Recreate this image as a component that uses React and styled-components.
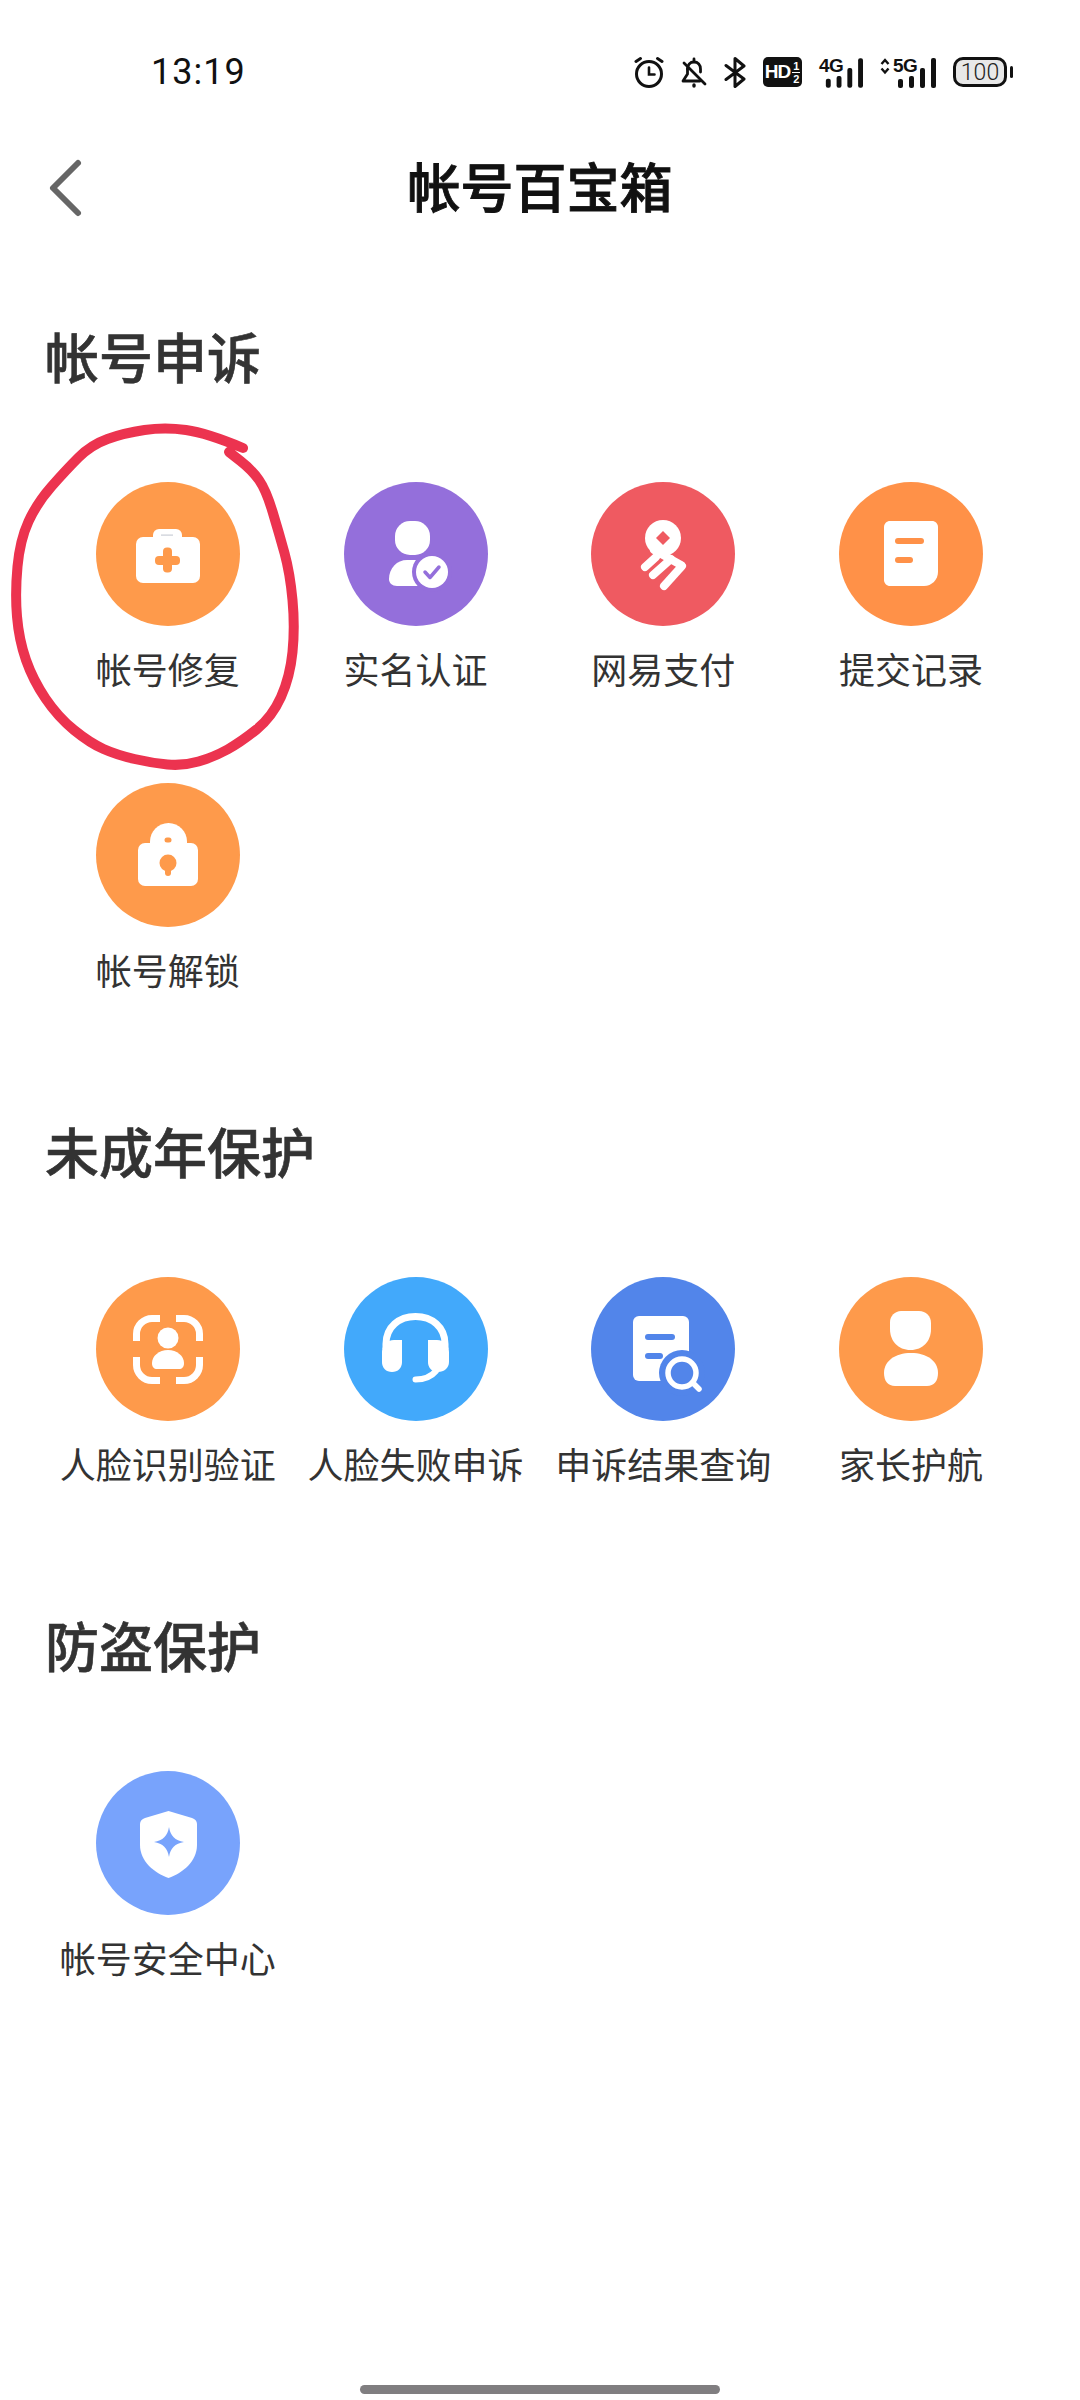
import React from "react"
import styled, { createGlobalStyle } from "styled-components"

const GlobalStyle = createGlobalStyle`
  html, body {
    margin: 0;
    padding: 0;
    background: #fff;
  }
  * {
    box-sizing: border-box;
  }
`

const Page = styled.div`
  position: relative;
  display: flex;
  flex-direction: column;
  width: 1080px;
  height: 2400px;
  overflow: hidden;
  background: #fff;
  font-family: "Noto Sans CJK SC", "Noto Sans", sans-serif;
`

const StatusBar = styled.div`
  display: flex;
  align-items: center;
  justify-content: space-between;
  height: 144px;
  padding: 0 68px 0 151px;
`

const Time = styled.span`
  font-family: Roboto, "Liberation Sans", sans-serif;
  font-size: 36px;
  color: #111;
  letter-spacing: 1px;
`

const StatusIcons = styled.div`
  display: flex;
  align-items: center;
  gap: 17px;
`

const HdBadge = styled.div`
  display: flex;
  align-items: center;
  justify-content: center;
  gap: 2px;
  width: 39px;
  height: 30px;
  border-radius: 5px;
  background: #111;
  color: #fff;
  font-family: "Liberation Sans", sans-serif;
  font-weight: 700;
`

const HdText = styled.span`
  font-size: 19px;
  line-height: 22px;
  letter-spacing: -1px;
`

const HdRate = styled.span`
  display: flex;
  flex-direction: column;
  align-items: center;
  font-size: 11px;
  line-height: 12px;
`

const HdTop = styled.span`
  border-bottom: 1.5px solid #fff;
  padding: 0 1px;
`

const SignalBox = styled.div`
  position: relative;
  width: ${props => (props.$arrows ? "56px" : "44px")};
  height: 31px;
`

const SignalBars = styled.svg`
  display: block;
  width: 100%;
  height: 31px;
`

const SignalLabel = styled.span`
  position: absolute;
  left: ${props => (props.$arrows ? "13px" : "0")};
  top: 0;
  font-family: "Liberation Sans", sans-serif;
  font-size: 19px;
  line-height: 17px;
  font-weight: 700;
  letter-spacing: -0.5px;
  color: #111;
`

const Battery = styled.div`
  position: relative;
  display: flex;
  align-items: center;
  justify-content: center;
  width: 54px;
  height: 30px;
  margin-right: 5px;
  border: 3px solid #111;
  border-radius: 10px;
  background: #e8e8e8;
  font-family: Roboto, "Liberation Sans", sans-serif;
  font-size: 23px;
  font-weight: 300;
  color: #222;

  &::after {
    content: "";
    position: absolute;
    right: -9px;
    top: 6px;
    width: 3px;
    height: 12px;
    border-radius: 2px;
    background: #111;
  }
`

const NavBar = styled.div`
  display: grid;
  grid-template-columns: 1fr auto 1fr;
  align-items: center;
  height: 88px;
  padding: 0 46px;
`

const BackIcon = styled.svg`
  display: block;
  width: 40px;
  height: 64px;
`

const Title = styled.h1`
  margin: 0;
  padding-bottom: 6px;
  font-size: 53px;
  line-height: 60px;
  font-weight: 500;
  -webkit-text-stroke: 0.9px #111;
  color: #111;
`

const Section = styled.section`
  margin-top: ${props => (props.$first ? "94px" : "127px")};
`

const Heading = styled.h2`
  margin: 0 0 96px;
  padding-left: 45px;
  font-size: 54px;
  line-height: 60px;
  font-weight: 500;
  -webkit-text-stroke: 0.6px #333;
  color: #333;
`

const ToolGrid = styled.div`
  display: grid;
  grid-template-columns: repeat(4, 247.7px);
  row-gap: 90px;
  padding-left: 44px;
`

const Tool = styled.div`
  display: flex;
  flex-direction: column;
  align-items: center;
`

const Badge = styled.div`
  width: 144px;
  height: 144px;
  border-radius: 50%;
  background: ${props => props.$color};
  color: ${props => props.$color};
`

const BadgeIcon = styled.svg`
  display: block;
  width: 144px;
  height: 144px;
`

const ToolLabel = styled.span`
  margin-top: 17px;
  font-size: 36px;
  line-height: 50px;
  white-space: nowrap;
  color: #333;
`

const HomeBar = styled.div`
  align-self: center;
  width: 360px;
  height: 9px;
  margin-top: auto;
  margin-bottom: 6px;
  border-radius: 5px;
  background: #807e80;
`

const Scribble = styled.svg`
  position: absolute;
  left: 0;
  top: 0;
  width: 320px;
  height: 800px;
  pointer-events: none;
`

// hand drawn ring round the first tool, points read off the reference
const ringPoints = [
  [243, 448], [207, 433], [165, 427], [124, 433], [91, 445], [66, 470], [37, 503],
  [20, 540], [15, 593], [19, 640], [33, 680], [58, 717], [90, 743], [117, 755],
  [152, 763], [183, 766], [214, 757], [241, 742], [272, 717], [290, 677], [295, 627],
  [290, 573], [279, 533], [266, 490], [252, 470], [229, 452],
]

const ringPath = points => {
  let d = `M${points[0][0]} ${points[0][1]}`
  for (let i = 1; i < points.length - 1; i++) {
    const midX = (points[i][0] + points[i + 1][0]) / 2
    const midY = (points[i][1] + points[i + 1][1]) / 2
    d += ` Q${points[i][0]} ${points[i][1]} ${midX} ${midY}`
  }
  const last = points[points.length - 1]
  return `${d} L${last[0]} ${last[1]}`
}

const Alarm = () => (
  <svg width="30" height="32" viewBox="0 0 30 32" fill="none" stroke="#111" strokeWidth="3" strokeLinecap="round">
    <circle cx="15" cy="18" r="12.5" />
    <path d="M15 11.5V18.5H20.5" strokeWidth="2.6" />
    <path d="M2 5.5L6.5 2.5M28 5.5L23.5 2.5" />
  </svg>
)

const BellOff = () => (
  <svg width="26" height="31" viewBox="0 0 26 31" fill="none" stroke="#111" strokeWidth="2.8" strokeLinecap="round" strokeLinejoin="round">
    <path d="M13 2V4" />
    <path d="M6.5 12C6.5 8 9 5 13 5C17 5 19.5 8 19.5 12V15" />
    <path d="M6.5 12V17L2 24H19" />
    <path d="M3 6L24 27" />
    <path d="M13 28V29" strokeWidth="3.4" />
  </svg>
)

const Bluetooth = () => (
  <svg width="22" height="31" viewBox="0 0 22 31" fill="none" stroke="#111" strokeWidth="3" strokeLinejoin="round" strokeLinecap="round">
    <path d="M2 8.5L20 22L11 29.5V1.5L20 9L2 22.5" />
  </svg>
)

const Signal = ({ label, arrows }) => {
  const left = arrows ? 18 : 7
  return (
    <SignalBox $arrows={arrows}>
      <SignalBars viewBox={`0 0 ${left + 38} 31`}>
        {arrows && (
          <path d="M1.500 7L5 3L8.500 7M1.500 11.500L5 15.500L8.500 11.500" fill="none" stroke="#111" strokeWidth="2.400" />
        )}
        <rect x={left} y="22" width="5" height="9" rx="2" fill="#111" />
        <rect x={left + 11} y="19" width="5" height="12" rx="2" fill="#111" />
        <rect x={left + 22} y="11" width="5" height="20" rx="2" fill="#111" />
        <rect x={left + 33} y="1" width="5" height="30" rx="2" fill="#111" />
      </SignalBars>
      <SignalLabel $arrows={arrows}>{label}</SignalLabel>
    </SignalBox>
  )
}

const MedKit = () => (
  <>
    <rect x="57" y="47" width="29" height="18" rx="6" fill="#fff" />
    <rect x="40" y="55" width="64" height="46" rx="7" fill="#fff" />
    <rect x="65" y="52.500" width="12" height="1.200" fill="#c9cdd6" />
    <rect x="59" y="74" width="25" height="9" rx="4" fill="currentColor" />
    <rect x="67" y="65.500" width="9" height="25" rx="4" fill="currentColor" />
  </>
)

const PersonCheck = () => (
  <>
    <rect x="51" y="39" width="35" height="34" rx="15" fill="#fff" />
    <path d="M45 97C45 86 53 78 63 78H76C84 78 88 84 88 92V104H53C48 104 45 101 45 97Z" fill="#fff" />
    <circle cx="88" cy="90" r="20" fill="currentColor" />
    <circle cx="88" cy="90" r="16" fill="#fff" />
    <path d="M81 90L86 95.500L95 85" fill="none" stroke="currentColor" strokeWidth="3.500" strokeLinecap="round" strokeLinejoin="round" />
  </>
)

const NetEasePay = () => (
  <>
    <circle cx="72" cy="56" r="18" fill="#fff" />
    <path d="M72 49L79 56L72 63L65 56Z" fill="currentColor" />
    <g fill="none" stroke="#fff" strokeWidth="8" strokeLinecap="round">
      <path d="M63 68L90 83" />
      <path d="M65 75L54 85" />
      <path d="M80 77L62 93" />
      <path d="M91 84L73 104" />
    </g>
  </>
)

const Note = () => (
  <>
    <path d="M51 39H93C96.300 39 99 41.700 99 45V90C99 97.700 92.700 104 85 104H51C47.700 104 45 101.300 45 98V45C45 41.700 47.700 39 51 39Z" fill="#fff" />
    <rect x="56" y="56" width="29" height="6" rx="3" fill="currentColor" />
    <rect x="56" y="75" width="18" height="6" rx="3" fill="currentColor" />
  </>
)

const LockIcon = () => (
  <>
    <path d="M54 66V58.500C54 48.300 62.300 40 72.500 40C82.700 40 91 48.300 91 58.500V66Z" fill="#fff" />
    <rect x="42" y="60" width="60" height="43" rx="7" fill="#fff" />
    <rect x="68.500" y="54.500" width="7" height="5" rx="2.500" fill="currentColor" />
    <circle cx="72" cy="80" r="8.500" fill="currentColor" />
    <rect x="69" y="82" width="6" height="11" rx="3" fill="currentColor" />
  </>
)

const FaceScan = () => (
  <>
    <g fill="none" stroke="#fff" strokeWidth="7">
      <path d="M64 41.500H56C47.500 41.500 40.500 48.500 40.500 57V64" />
      <path d="M80 41.500H88C96.500 41.500 103.500 48.500 103.500 57V64" />
      <path d="M64 103.500H56C47.500 103.500 40.500 96.500 40.500 88V80" />
      <path d="M80 103.500H88C96.500 103.500 103.500 96.500 103.500 88V80" />
    </g>
    <circle cx="72" cy="61" r="10.500" fill="#fff" />
    <path d="M56 86C56 79 63 73 72 73C81 73 88 79 88 86C88 90 86 92 83 92H61C58 92 56 90 56 86Z" fill="#fff" />
  </>
)

const Headset = () => (
  <>
    <path d="M42 72V67C42 50 55 39.500 71.500 39.500C88 39.500 101 50 101 67V72" fill="none" stroke="#fff" strokeWidth="7" />
    <path d="M38 75C38 68 43 63 50 63H58V85C58 91 54 95 48 95C42 95 38 91 38 85Z" fill="#fff" />
    <path d="M84 63H93C100 63 105 68 105 75V85C105 91 100 95 94 95C88 95 84 91 84 85Z" fill="#fff" />
    <path d="M71.500 102.500C80 102.500 87 100 92 94" fill="none" stroke="#fff" strokeWidth="6" strokeLinecap="round" />
  </>
)

const DocSearch = () => (
  <>
    <rect x="42" y="39" width="56" height="65" rx="6" fill="#fff" />
    <rect x="54" y="57" width="30" height="6" rx="3" fill="currentColor" />
    <rect x="54" y="76" width="18" height="6" rx="3" fill="currentColor" />
    <circle cx="91" cy="96" r="23" fill="currentColor" />
    <circle cx="91" cy="96" r="14" fill="none" stroke="#fff" strokeWidth="5.500" />
    <path d="M102 106L108 112" stroke="#fff" strokeWidth="5.500" strokeLinecap="round" />
  </>
)

const Guardian = () => (
  <>
    <path d="M62 34H80C87 34 92 39 92 46V52C92 64 84 73 71.500 73C59 73 51 64 51 52V45C51 39 56 34 62 34Z" fill="#fff" />
    <path d="M45 96C45 84 56 76 72 76C88 76 99 84 99 96C99 104 95 109 88 109H56C49 109 45 104 45 96Z" fill="#fff" />
  </>
)

const Shield = () => (
  <>
    <path d="M72.500 40L96 47C99 48 101 50 101 53V74C101 90 87 102 72.500 107C58 102 44 90 44 74V53C44 50 46 48 49 47Z" fill="#fff" />
    <path d="M73 56C74.500 65 79 69.500 88 71C79 72.500 74.500 77 73 86C71.500 77 67 72.500 58 71C67 69.500 71.500 65 73 56Z" fill="currentColor" />
  </>
)

const ORANGE = "#fe9a4b"

const sections = [
  {
    title: "帐号申诉",
    tools: [
      { label: "帐号修复", color: ORANGE, Icon: MedKit },
      { label: "实名认证", color: "#946fdb", Icon: PersonCheck },
      { label: "网易支付", color: "#ef5a61", Icon: NetEasePay },
      { label: "提交记录", color: "#ff9148", Icon: Note },
      { label: "帐号解锁", color: ORANGE, Icon: LockIcon },
    ],
  },
  {
    title: "未成年保护",
    tools: [
      { label: "人脸识别验证", color: ORANGE, Icon: FaceScan },
      { label: "人脸失败申诉", color: "#42a9fb", Icon: Headset },
      { label: "申诉结果查询", color: "#5285ea", Icon: DocSearch },
      { label: "家长护航", color: ORANGE, Icon: Guardian },
    ],
  },
  {
    title: "防盗保护",
    tools: [{ label: "帐号安全中心", color: "#78a3fc", Icon: Shield }],
  },
]

const App = () => (
  <Page>
    <GlobalStyle />
    <StatusBar>
      <Time>13:19</Time>
      <StatusIcons>
        <Alarm />
        <BellOff />
        <Bluetooth />
        <HdBadge>
          <HdText>HD</HdText>
          <HdRate>
            <HdTop>1</HdTop>
            <span>2</span>
          </HdRate>
        </HdBadge>
        <Signal label="4G" />
        <Signal label="5G" arrows />
        <Battery>100</Battery>
      </StatusIcons>
    </StatusBar>
    <NavBar>
      <BackIcon viewBox="0 0 40 64" fill="none">
        <path d="M32 7L7 32L32 57" stroke="#666" strokeWidth="6" strokeLinecap="round" strokeLinejoin="round" />
      </BackIcon>
      <Title>帐号百宝箱</Title>
    </NavBar>
    {sections.map((section, index) => (
      <Section key={section.title} $first={index === 0}>
        <Heading>{section.title}</Heading>
        <ToolGrid>
          {section.tools.map(({ label, color, Icon }) => (
            <Tool key={label}>
              <Badge $color={color}>
                <BadgeIcon viewBox="0 0 144 144">
                  <Icon />
                </BadgeIcon>
              </Badge>
              <ToolLabel>{label}</ToolLabel>
            </Tool>
          ))}
        </ToolGrid>
      </Section>
    ))}
    <HomeBar />
    <Scribble viewBox="0 0 320 800" fill="none">
      <path d={ringPath(ringPoints)} stroke="#ec334f" strokeWidth="10" strokeLinecap="round" strokeLinejoin="round" />
    </Scribble>
  </Page>
)

export default App
